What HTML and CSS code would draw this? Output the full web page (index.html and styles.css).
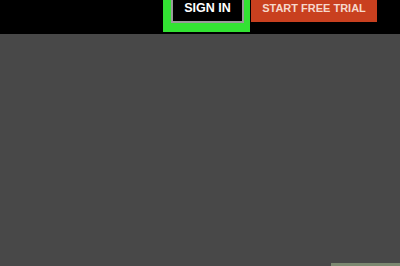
FILE: index.html
```html
<!DOCTYPE html>
<html>
<head>
<meta charset="utf-8">
<link rel="stylesheet" href="styles.css">
</head>
<body>
<header class="topbar">
  <div class="highlight">
    <a class="btn-signin">SIGN IN</a>
  </div>
  <a class="btn-trial">START FREE TRIAL</a>
</header>
<main class="content">
  <div class="corner-patch"></div>
</main>
</body>
</html>
```
FILE: styles.css
```css
html, body {
  margin: 0;
  padding: 0;
}
body {
  width: 400px;
  height: 266px;
  overflow: hidden;
  background: #484848;
  font-family: "Liberation Sans", Arial, sans-serif;
}
.topbar {
  height: 34px;
  background: #000;
  display: flex;
  justify-content: flex-end;
  align-items: flex-start;
  padding-right: 23px;
  box-sizing: border-box;
}
.highlight {
  background: #33e333;
  width: 87px;
  height: 32px;
  box-sizing: border-box;
  padding: 0 6px 9px 8px;
  display: flex;
}
.btn-signin {
  flex: 1;
  background: #000;
  border: 2px solid #9a9a9a;
  border-top: none;
  color: #fff;
  font-weight: bold;
  font-size: 12.5px;
  line-height: 12px;
  padding-top: 2px;
  text-align: center;
  box-sizing: border-box;
}
.btn-trial {
  margin-left: 1px;
  width: 126px;
  height: 22px;
  background: #c9401f;
  color: #f6d8cc;
  font-weight: bold;
  font-size: 11px;
  line-height: 11px;
  padding-top: 3px;
  text-align: center;
  box-sizing: border-box;
}
.content {
  height: 232px;
  display: flex;
  flex-direction: column;
  justify-content: flex-end;
  align-items: flex-end;
}
.corner-patch {
  width: 69px;
  height: 3px;
  background: #7b8870;
}
```
